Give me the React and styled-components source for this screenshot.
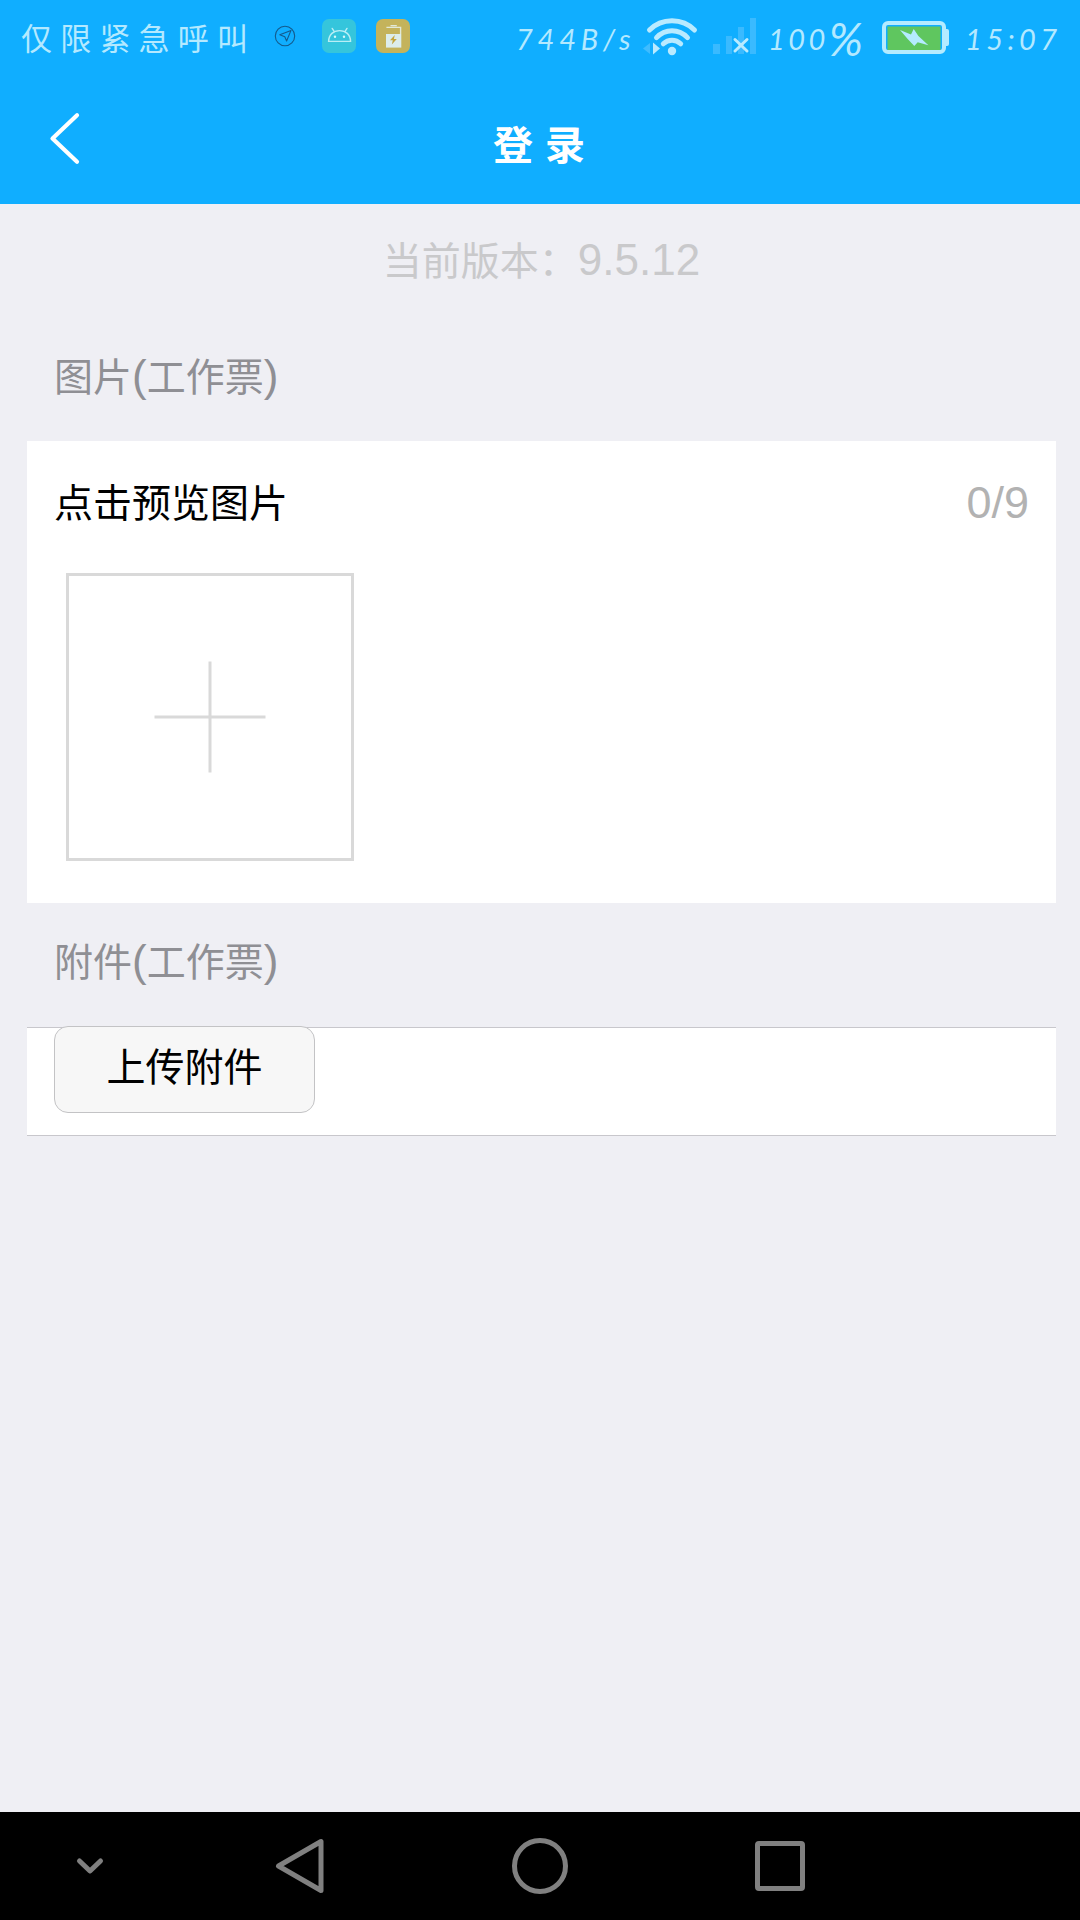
import styled, { createGlobalStyle } from "styled-components";

const GlobalStyle = createGlobalStyle`
  * {
    box-sizing: border-box;
  }

  body {
    margin: 0;
    background: #efeff4;
    font-family: "Liberation Sans", "Noto Sans CJK SC", sans-serif;
  }
`;

const Screen = styled.div`
  width: 1080px;
  height: 1920px;
  display: flex;
  flex-direction: column;
  overflow: hidden;
`;

const StatusBar = styled.div`
  height: 72px;
  padding-left: 21px;
  display: flex;
  align-items: flex-start;
  background: #10aeff;
  color: #b4e9ff;

  svg {
    display: block;
    flex: none;
  }
`;

const Carrier = styled.span`
  width: 249px;
  padding-top: 18px;
  flex: none;
  font-size: 31px;
  line-height: 44px;
  letter-spacing: 8.2px;
  white-space: nowrap;
`;

const StatusText = styled.span`
  width: ${(props) => props.$width}px;
  margin-left: ${(props) => props.$gap || 0}px;
  padding-top: 17px;
  flex: none;
  font-family: Lato, sans-serif;
  font-size: 29px;
  line-height: 44px;
  font-style: italic;
  letter-spacing: ${(props) => props.$spacing}px;
  white-space: nowrap;
`;

const Percent = styled.span`
  font-size: 46px;
  line-height: 0;
  vertical-align: -6px;
`;

const Header = styled.header`
  height: 132px;
  display: grid;
  grid-template-columns: 130px 1fr 130px;
  align-items: start;
  background: #10aeff;
`;

const BackButton = styled.button`
  padding: 39px 0 0 48px;
  border: 0;
  background: none;
  text-align: left;

  svg {
    display: block;
  }
`;

const Title = styled.h1`
  margin: 0;
  padding: 44px 0 0 10px;
  color: #fff;
  font-size: 40px;
  line-height: 60px;
  font-weight: 700;
  letter-spacing: 12px;
  text-align: center;
`;

const Content = styled.main`
  flex: 1;
  padding: 0 24px 0 27px;
  display: flex;
  flex-direction: column;
`;

const Version = styled.div`
  height: 114px;
  color: #c9c9cb;
  font-size: 39px;
  line-height: 115px;
  text-align: center;
`;

const Latin = styled.span`
  font-size: 44px;
  line-height: 0;
`;

const SectionLabel = styled.div`
  height: ${(props) => props.$height}px;
  padding-left: 27px;
  color: #8f8f94;
  font-size: 39px;
  line-height: 120px;
`;

const Card = styled.section`
  height: 462px;
  padding: 0 27px;
  background: #fff;
`;

const CardHeader = styled.div`
  height: 132px;
  display: flex;
  justify-content: space-between;
  color: #000;
  font-size: 39px;
  line-height: 125px;
`;

const Counter = styled.span`
  color: #b2b2b2;
  font-size: 45px;
  line-height: 123px;
`;

const AddPicture = styled.button`
  width: 288px;
  height: 288px;
  margin-left: 12px;
  padding: 0;
  display: flex;
  align-items: center;
  justify-content: center;
  border: 3px solid #d9d9d9;
  background: #fff;
`;

const AttachmentRow = styled.div`
  height: 109px;
  padding-left: 27px;
  border-top: 1px solid #c8c7cc;
  border-bottom: 1px solid #c8c7cc;
  background: #fff;
`;

const UploadButton = styled.button`
  display: block;
  width: 261px;
  height: 87px;
  margin-top: -2px;
  padding: 0 0 3px;
  border: 1px solid #c3c3c5;
  border-radius: 14px;
  background: #f7f7f7;
  color: #000;
  font-family: inherit;
  font-size: 39px;
  line-height: 80px;
`;

const NavBar = styled.nav`
  height: 108px;
  display: grid;
  grid-template-columns: 180px 240px 240px 240px 180px;
  align-items: center;
  justify-items: center;
  background: #000;
`;

const NavIcon = ({ children }) => (
  <svg
    width="60"
    height="60"
    viewBox="0 0 60 60"
    fill="none"
    stroke="#808080"
    strokeWidth="5"
    strokeLinecap="round"
    strokeLinejoin="round"
  >
    {children}
  </svg>
);

// location, android and power saver notifications
const NotificationIcons = () => (
  <svg width="142" height="72" viewBox="270 0 142 72" fill="none">
    <g stroke="#145a8c" strokeWidth="1.1" strokeLinejoin="round">
      <circle cx="285" cy="36" r="9.7" />
      <path d="M279.8 34.8L291 30.4L286.6 41L284.8 36.8Z" />
    </g>
    <rect x="322" y="19" width="34" height="34" rx="7" fill="#35c5dc" />
    <path
      d="M328.6 41.4C328.8 34.4 333.5 30.6 339.6 30.6C345.7 30.6 350.4 34.4 350.6 41.4ZM334.4 31.8L332.2 28.4M344.8 31.8L347 28.4"
      stroke="#b9eef5"
      strokeWidth="1.4"
      strokeLinecap="round"
    />
    <circle cx="335" cy="36.8" r="1.2" fill="#d6f7fa" />
    <circle cx="344" cy="36.8" r="1.2" fill="#d6f7fa" />
    <rect x="376" y="19" width="34" height="34" rx="7" fill="#c4b35b" />
    <path
      d="M386.4 27.4H400.6V34M390.5 25.6H396.8"
      stroke="#e2e9d6"
      strokeWidth="1.4"
    />
    <path d="M386 34H401.3V47.6H386Z" fill="#dcedec" />
    <path d="M394.8 35L390 40.3H392.8L391.8 44.5L396.8 39H393.9Z" fill="#c4a53c" />
  </svg>
);

const SignalIcons = () => (
  <svg width="116" height="72" viewBox="642 0 116 72" fill="none">
    <path d="M650 43V54L643 48.5Z" fill="#3fbcff" />
    <path d="M653 42.5L660 48.5L653 54.5Z" fill="#b9eaff" />
    <g stroke="#b9eaff" strokeWidth="5" strokeLinecap="round">
      <path d="M649.5 30C661.5 17.6 682.5 17.6 694.5 30" />
      <path d="M656.5 37.6C665 28.4 679 28.4 687.5 37.6" />
      <path d="M663.3 43.8C668.3 39 675.7 39 680.7 43.8" />
    </g>
    <circle cx="672" cy="51" r="4.2" fill="#b9eaff" />
    <path
      d="M713 44h7v10h-7zM726 36h6v18h-6zM738 27h6v27h-6zM750 18h6v36h-6z"
      fill="#3abaff"
    />
    <path
      d="M735 39.5L747 51M747 39.5L735 51"
      stroke="#b9eaff"
      strokeWidth="3"
      strokeLinecap="round"
    />
  </svg>
);

const BatteryIcon = () => (
  <svg width="68" height="72" viewBox="882 0 68 72" fill="none">
    <rect x="884" y="23" width="60" height="29" rx="4" stroke="#b4ebff" strokeWidth="4" />
    <path d="M946 29h1a2 2 0 0 1 2 2v13a2 2 0 0 1 -2 2h-1z" fill="#b4ebff" />
    <rect x="887.5" y="26.5" width="53" height="23.5" fill="#5fc65f" />
    <path
      d="M900 30L911 34.6L913.7 29L918.4 36L928.4 45.3L917.7 42.2L914.3 45.9L907.7 39Z"
      fill="#b4ebff"
    />
  </svg>
);

export default function App() {
  return (
    <Screen>
      <GlobalStyle />
      <StatusBar>
        <Carrier>仅限紧急呼叫</Carrier>
        <NotificationIcons />
        <StatusText $width={126} $gap={104} $spacing={4.8}>
          744B/s
        </StatusText>
        <SignalIcons />
        <StatusText $width={114} $gap={10} $spacing={3.4}>
          100<Percent>%</Percent>
        </StatusText>
        <BatteryIcon />
        <StatusText $width={110} $gap={15} $spacing={4.4}>
          15:07
        </StatusText>
      </StatusBar>
      <Header>
        <BackButton aria-label="返回">
          <svg width="34" height="56" viewBox="48 111 34 56" fill="none">
            <path
              d="M77 115.3L52.5 138.5L77 161.8"
              stroke="#fff"
              strokeWidth="4.2"
              strokeLinecap="round"
              strokeLinejoin="round"
            />
          </svg>
        </BackButton>
        <Title>登录</Title>
      </Header>
      <Content>
        <Version>
          当前版本：<Latin>9.5.12</Latin>
        </Version>
        <SectionLabel $height={123}>
          图片<Latin>(</Latin>工作票<Latin>)</Latin>
        </SectionLabel>
        <Card>
          <CardHeader>
            <span>点击预览图片</span>
            <Counter>0/9</Counter>
          </CardHeader>
          <AddPicture aria-label="添加图片">
            <svg width="112" height="112" viewBox="0 0 112 112">
              <path d="M56 0.5V111.5M0.5 56H111.5" stroke="#d9d9d9" strokeWidth="3" />
            </svg>
          </AddPicture>
        </Card>
        <SectionLabel $height={124}>
          附件<Latin>(</Latin>工作票<Latin>)</Latin>
        </SectionLabel>
        <AttachmentRow>
          <UploadButton>上传附件</UploadButton>
        </AttachmentRow>
      </Content>
      <NavBar>
        <NavIcon>
          <path d="M19.5 25L30 35L40.5 25" />
        </NavIcon>
        <NavIcon>
          <path d="M51 5.5V54.5L8.5 30Z" />
        </NavIcon>
        <NavIcon>
          <circle cx="30" cy="30" r="25.5" />
        </NavIcon>
        <NavIcon>
          <rect x="7.5" y="7.5" width="45" height="45" rx="1.5" />
        </NavIcon>
      </NavBar>
    </Screen>
  );
}
